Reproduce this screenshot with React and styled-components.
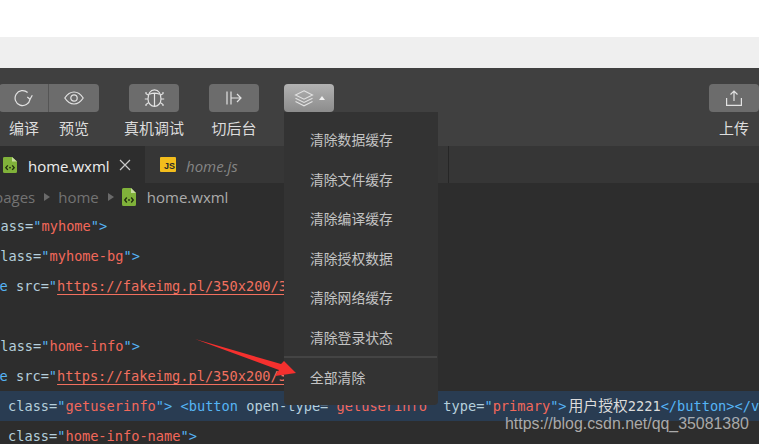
import React from 'react';
import styled, {createGlobalStyle} from 'styled-components';

const GlobalStyle = createGlobalStyle`
  html, body {
    margin: 0;
    padding: 0;
    height: 444px;
    overflow: hidden;
    background: #ffffff;
  }
`;

const CJK = `"Noto Sans CJK SC", "Liberation Sans", sans-serif`;
const MONO = `"DejaVu Sans Mono", "Liberation Mono", "Noto Sans CJK SC", monospace`;

const Page = styled.div`
  position: relative;
  width: 759px;
  height: 444px;
  overflow: hidden;
  display: flex;
  flex-direction: column;
`;

const BlankBar = styled.div`
  height: 37px;
  flex: none;
  background: #ffffff;
`;

const GreyBand = styled.div`
  height: 31px;
  flex: none;
  background: #efefef;
`;

const Ide = styled.div`
  flex: 1;
  min-height: 0;
  display: flex;
  flex-direction: column;
  background: #2d2d2d;
`;

const Toolbar = styled.div`
  height: 78px;
  flex: none;
  box-sizing: border-box;
  padding-top: 16px;
  display: flex;
  background: #404040;
`;

const ToolItem = styled.div`
  width: 50px;
  flex: none;
  display: flex;
  flex-direction: column;
  align-items: center;
  margin-left: ${p => p.$gap || 0}px;
  ${p => p.$right && 'margin-left: auto;'}
`;

const ToolButton = styled.div`
  width: 50px;
  height: 28px;
  box-sizing: border-box;
  display: flex;
  align-items: center;
  justify-content: center;
  gap: 5px;
  color: #e2e2e2;
  background: ${p => p.$active ? 'linear-gradient(#b2b2b2, #8c8c8c)' : '#6c6c6c'};
  border-radius: ${p => p.$radius || '4px'};
  border-right: ${p => p.$split ? '1px solid #555555' : 'none'};
`;

const ToolLabel = styled.div`
  margin-top: 6px;
  font: 15px/20px ${CJK};
  color: #dddddd;
  white-space: nowrap;
`;

const TabBar = styled.div`
  height: 37px;
  flex: none;
  display: flex;
  background: #363636;
`;

const Tab = styled.div`
  width: ${p => p.$width}px;
  flex: none;
  box-sizing: border-box;
  padding-left: ${p => p.$pad}px;
  display: flex;
  align-items: center;
  background: ${p => p.$active ? '#2d2d2d' : 'transparent'};
  border-right: ${p => p.$line ? '1px solid #262626' : 'none'};
`;

const TabName = styled.span`
  margin-left: ${p => p.$gap}px;
  margin-top: 2px;
  font: ${p => p.$active ? 'normal' : 'italic'} 15px "Open Sans", sans-serif;
  color: ${p => p.$active ? '#eeeeee' : '#858585'};
`;

const CloseMark = styled.svg`
  margin-left: 9px;
  width: 12px;
  height: 12px;
`;

const JsBadge = styled.span`
  width: 16px;
  height: 15px;
  display: flex;
  align-items: flex-end;
  justify-content: flex-end;
  box-sizing: border-box;
  padding: 0 1px 1px 0;
  background: #f3bd1c;
  border-radius: 1px;
  color: #2a2a2a;
  font: bold 9px/9px "Liberation Sans", sans-serif;
`;

const Breadcrumb = styled.div`
  height: 28px;
  flex: none;
  display: flex;
  align-items: center;
  margin-left: -6px;
  font: 15px "Open Sans", sans-serif;
  color: #737373;
`;

const CrumbArrow = styled.span`
  width: 0;
  height: 0;
  margin: 0 8px 0 9px;
  border-left: 6px solid #6a6a6a;
  border-top: 4.5px solid transparent;
  border-bottom: 4.5px solid transparent;
`;

const CrumbFile = styled.span`
  margin-left: 11px;
  color: #ababab;
`;

const CodeLine = styled.div`
  height: 30px;
  flex: none;
  padding-left: ${p => Math.max(p.$offset, 0)}px;
  margin-left: ${p => Math.min(p.$offset, 0)}px;
  font: 13.65px/30px ${MONO};
  color: #b5cfdc;
  white-space: pre;
  background: ${p => p.$highlight ? '#293c52' : 'transparent'};
  ${p => p.$highlight && 'margin-right: -200px;'}
`;

const Punct = styled.span`
  color: #55b4f5;
`;

const Str = styled.span`
  color: #f2685a;
`;

const Link = styled.span`
  color: #f2705f;
  text-decoration: underline;
  text-underline-offset: 3px;
`;

const Plain = styled.span`
  color: #dcdcdc;
`;

const Wide = styled.span`
  margin-left: 2px;
  font-size: 14.8px;
`;

const Dropdown = styled.div`
  position: absolute;
  left: 284px;
  top: 112px;
  width: 154px;
  height: 293px;
  box-sizing: border-box;
  padding-top: 8px;
  background: #333333;
  border-radius: 0 0 4px 4px;
  display: flex;
  flex-direction: column;
`;

const MenuItem = styled.div`
  height: 39.5px;
  flex: none;
  padding-left: 26px;
  font: 13.8px/39.5px ${CJK};
  color: #c4c4c4;
`;

const MenuDivider = styled.div`
  height: 2px;
  flex: none;
  margin: -1px 1px 0 0;
  background: #444444;
`;

const ArrowMark = styled.svg`
  position: absolute;
  left: 0;
  top: 0;
  width: 759px;
  height: 444px;
  pointer-events: none;
`;

const Watermark = styled.div`
  position: absolute;
  left: 505px;
  top: 414px;
  font: 15.9px/20px "Liberation Sans", sans-serif;
  color: rgba(205, 205, 205, 0.78);
  white-space: nowrap;
`;

const FileIcon = ({height = 18}) => (
  <svg width="14" height={height} viewBox="0 0 14 18" preserveAspectRatio="none">
    <path d="M1.5 0H9L14 5v11.5a1.5 1.5 0 0 1-1.5 1.5h-11A1.5 1.5 0 0 1 0 16.5v-15A1.5 1.5 0 0 1 1.5 0z" fill="#80b23a" />
    <path d="M9 0v5h5z" fill="#c7dc9f" />
    <path d="M4.800 9.500 2.800 12l2 2.500M9.200 9.500l2 2.500-2 2.500" fill="none" stroke="#22300f" strokeWidth="1.4" />
    <circle cx="7" cy="12" r="0.900" fill="#22300f" />
  </svg>
);

const ReloadIcon = () => (
  <svg width="20" height="20" viewBox="0 0 20 20" fill="none" stroke="currentColor" strokeWidth="1.2">
    <path d="M16 11.300A7.500 7.500 0 1 1 13.600 4.500" />
    <path d="M13.300 9 16 11.300 18.300 7.300" />
  </svg>
);

const EyeIcon = () => (
  <svg width="20" height="14" viewBox="0 0 20 14" fill="none" stroke="currentColor" strokeWidth="1.2">
    <path d="M.8 7C3.4 3 6.4 1 10 1s6.600 2 9.200 6c-2.600 4-5.600 6-9.200 6S3.400 11 .8 7z" />
    <circle cx="10" cy="7" r="3.200" />
  </svg>
);

const BugIcon = () => (
  <svg width="21" height="18" viewBox="0 0 21 18" fill="none" stroke="currentColor" strokeWidth="1.2">
    <path d="M10.500 .8C6.300 .8 4 5 4 10c0 4.300 3 7.300 6.500 7.300S17 14.300 17 10c0-5-2.300-9.200-6.500-9.200z" />
    <path d="M10.500 4.300v13M5.300 5.300c3.200-1.400 7.200-1.400 10.400 0" />
    <path d="M4.700 6.300 2 4.700V3M16.300 6.300 19 4.700V3M4 10H.8M17 10h3.200M4.800 13.500 2 15.500v1.500M16.200 13.500l2.800 2v1.500" />
  </svg>
);

const SwitchIcon = () => (
  <svg width="16" height="14" viewBox="0 0 16 14" fill="none" stroke="currentColor" strokeWidth="1.2">
    <path d="M1 .5v13M5 .5v13" />
    <path d="M5 7h10M11 3l4 4-4 4" />
  </svg>
);

const LayersIcon = () => (
  <svg width="20" height="17" viewBox="0 0 20 17" fill="none" stroke="currentColor" strokeWidth="1.1">
    <path d="M10 .8 18.500 5 10 9.200 1.500 5z" />
    <path d="M1.500 8.300 10 12.500l8.500-4.200" />
    <path d="M1.500 11.600 10 15.800l8.500-4.200" />
  </svg>
);

const UploadIcon = () => (
  <svg width="16" height="16" viewBox="0 0 16 16" fill="none" stroke="currentColor" strokeWidth="1.2">
    <path d="M8 11V1M4.500 4.500 8 1l3.500 3.500" />
    <path d="M.6 8v7.400h14.800V8" />
  </svg>
);

const Caret = styled.span`
  width: 0;
  height: 0;
  border-left: 3.5px solid transparent;
  border-right: 3.5px solid transparent;
  border-bottom: 4px solid #f0f0f0;
`;

const Q = () => <Punct>"</Punct>;

const ClassLine = ({offset, name}) => (
  <CodeLine $offset={offset}>
    class=<Q /><Str>{name}</Str><Q /><Punct>&gt;</Punct>
  </CodeLine>
);

const ImageLine = () => (
  <CodeLine $offset={-41.5}>
    <Punct>&lt;image</Punct> src=<Q /><Link>https://fakeimg.pl/350x200/333</Link>
  </CodeLine>
);

const menuItems = ['清除数据缓存', '清除文件缓存', '清除编译缓存', '清除授权数据', '清除网络缓存', '清除登录状态'];

const App = () => (
  <Page>
    <GlobalStyle />
    <BlankBar />
    <GreyBand />
    <Ide>
      <Toolbar>
        <ToolItem $gap={-1}>
          <ToolButton $radius="4px 0 0 4px" $split><ReloadIcon /></ToolButton>
          <ToolLabel>编译</ToolLabel>
        </ToolItem>
        <ToolItem>
          <ToolButton $radius="0 4px 4px 0"><EyeIcon /></ToolButton>
          <ToolLabel>预览</ToolLabel>
        </ToolItem>
        <ToolItem $gap={30}>
          <ToolButton><BugIcon /></ToolButton>
          <ToolLabel>真机调试</ToolLabel>
        </ToolItem>
        <ToolItem $gap={30}>
          <ToolButton><SwitchIcon /></ToolButton>
          <ToolLabel>切后台</ToolLabel>
        </ToolItem>
        <ToolItem $gap={25}>
          <ToolButton $active><LayersIcon /><Caret /></ToolButton>
        </ToolItem>
        <ToolItem $right>
          <ToolButton><UploadIcon /></ToolButton>
          <ToolLabel>上传</ToolLabel>
        </ToolItem>
      </Toolbar>
      <TabBar>
        <Tab $active $width={145} $pad={3}>
          <FileIcon height={16} />
          <TabName $active $gap={11}>home.wxml</TabName>
          <CloseMark viewBox="0 0 12 12" fill="none" stroke="#c8c8c8" strokeWidth="1.2">
            <path d="M1 1l10 10M11 1 1 11" />
          </CloseMark>
        </Tab>
        <Tab $width={304} $pad={15} $line>
          <JsBadge>JS</JsBadge>
          <TabName $gap={10}>home.js</TabName>
        </Tab>
      </TabBar>
      <Breadcrumb>
        pages
        <CrumbArrow />
        home
        <CrumbArrow />
        <FileIcon />
        <CrumbFile>home.wxml</CrumbFile>
      </Breadcrumb>
      <ClassLine offset={-16} name="myhome" />
      <ClassLine offset={-8} name="myhome-bg" />
      <ImageLine />
      <CodeLine $offset={0} />
      <ClassLine offset={-8} name="home-info" />
      <ImageLine />
      <CodeLine $offset={8} $highlight>
        class=<Q /><Str>getuserinfo</Str><Q /><Punct>&gt;</Punct> <Punct>&lt;button</Punct> open-type=<Q /><Str>getuserinfo</Str><Q /> type=<Q /><Str>primary</Str><Q /><Punct>&gt;</Punct><Plain><Wide>用户授权</Wide>2221</Plain><Punct>&lt;/button&gt;&lt;/view&gt;</Punct>
      </CodeLine>
      <ClassLine offset={8} name="home-info-name" />
    </Ide>
    <Dropdown>
      {menuItems.map(item => <MenuItem key={item}>{item}</MenuItem>)}
      <MenuDivider />
      <MenuItem>全部清除</MenuItem>
    </Dropdown>
    <ArrowMark viewBox="0 0 759 444">
      <polygon points="195,339 281,364 284,361 296,373 275,376 279,370" fill="#f5302e" />
    </ArrowMark>
    <Watermark>https://blog.csdn.net/qq_35081380</Watermark>
  </Page>
);

export default App;
